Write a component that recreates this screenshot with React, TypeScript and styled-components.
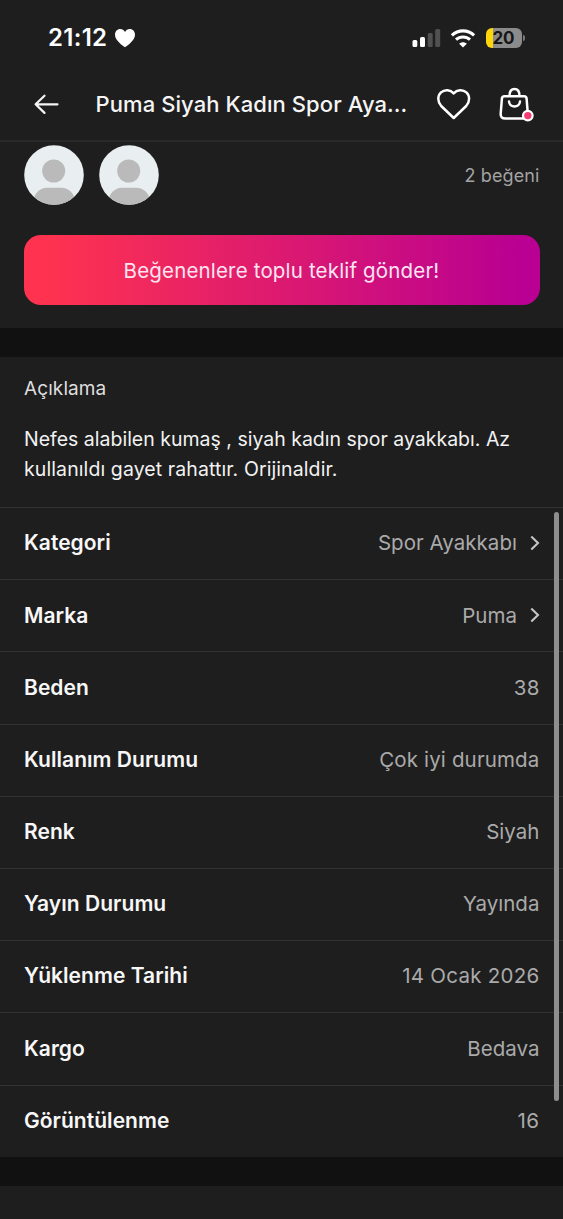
import React from "react";
import styled, { createGlobalStyle } from "styled-components";

const GlobalStyle = createGlobalStyle`
  * { box-sizing: border-box; }
  body {
    margin: 0;
    background: #1e1e1e;
    color: #f5f5f5;
    font-family: Inter, "Liberation Sans", sans-serif;
  }
`;

const Screen = styled.main`
  position: relative;
  display: flex;
  flex-direction: column;
  width: 563px;
  height: 1219px;
  overflow: hidden;
  background: #1e1e1e;
`;

const StatusBar = styled.div`
  display: flex;
  align-items: center;
  justify-content: space-between;
  height: 68px;
  padding: 8px 41.5px 0 48px;
`;

const Clock = styled.div`
  display: flex;
  align-items: center;
  gap: 6.5px;
  font-size: 24px;
  font-weight: 600;
  line-height: 28px;
  letter-spacing: 0.3px;
  color: #fff;
`;

const StatusIcons = styled.div`
  display: flex;
  align-items: center;
  gap: 9.5px;
`;

const Header = styled.header`
  display: flex;
  align-items: center;
  height: 74px;
  padding: 0 28px 0 33px;
  border-bottom: 2px solid #2a2a2a;
`;

const Title = styled.h1`
  flex: 1;
  margin: 0 0 0 35.5px;
  font-size: 22px;
  font-weight: 500;
  line-height: 30px;
  letter-spacing: 0.08px;
  white-space: nowrap;
  color: #f5f5f5;
`;

const HeaderActions = styled.div`
  display: flex;
  align-items: center;
  gap: 27px;
`;

const Likes = styled.section`
  display: flex;
  flex-direction: column;
  gap: 29.5px;
  height: 186px;
  padding: 3px 23.5px 0;
`;

const LikesRow = styled.div`
  display: flex;
  align-items: center;
  gap: 15px;
  height: 60.5px;
`;

const LikeCount = styled.span`
  margin-left: auto;
  font-size: 18px;
  letter-spacing: 0.1px;
  color: #a3a3a3;
`;

const OfferButton = styled.button`
  height: 70px;
  padding: 1px 0 0;
  border: 0;
  border-radius: 17px;
  background: linear-gradient(90deg, #ff334f 4%, #b90092 96%);
  color: #fde4f2;
  font-family: inherit;
  font-size: 20.5px;
  letter-spacing: 0.17px;
`;

const Band = styled.div`
  flex-shrink: 0;
  height: 29px;
  background: #111;
`;

const Description = styled.section`
  height: 151px;
  padding: 17px 24px 0;
  border-bottom: 1px solid #333;
`;

const SectionTitle = styled.h2`
  margin: 0 0 21px;
  font-size: 19px;
  font-weight: 400;
  line-height: 30px;
  letter-spacing: 0.1px;
  color: #dedede;
`;

const Line = styled.p<{ $track: number }>`
  margin: 0;
  font-size: 19.5px;
  line-height: 29.5px;
  letter-spacing: ${(p) => p.$track}px;
  white-space: nowrap;
  color: #f2f2f2;
`;

const Details = styled.dl`
  display: grid;
  grid-template-rows: repeat(8, 72.2px) 1fr;
  flex-shrink: 0;
  height: 648.5px;
  margin: 0;
`;

const DetailRow = styled.div`
  display: flex;
  align-items: center;
  justify-content: space-between;
  padding: 0 23.5px 1.5px 24px;
  &:not(:last-child) {
    border-bottom: 1px solid #333;
  }
`;

const Label = styled.dt`
  font-size: 21px;
  font-weight: 600;
  letter-spacing: 0.04px;
  color: #f7f7f7;
`;

const Value = styled.dd<{ $track: number }>`
  display: flex;
  align-items: center;
  gap: 12.5px;
  margin: 0;
  font-size: 20.5px;
  letter-spacing: ${(p) => p.$track}px;
  color: #aaa;
`;

const ScrollThumb = styled.div`
  position: absolute;
  top: 512px;
  right: 4px;
  width: 5px;
  height: 589px;
  border-radius: 3px;
  background: #8e8e8e;
`;

const SmallHeart = () => (
  <svg width="22" height="20" viewBox="0 0 22 20" fill="#fff">
    <path d="M11 19.2C8.800 17.600 1 12.600 1 6.700C1 3.400 3.300 1 6.200 1C8.300 1 10 2.100 11 3.900C12 2.100 13.700 1 15.800 1C18.700 1 21 3.400 21 6.700C21 12.600 13.200 17.600 11 19.200Z" />
  </svg>
);

const Signal = () => (
  <svg width="29" height="20" viewBox="0 0 29 20">
    <rect x="0.500" y="12" width="4.800" height="7" rx="1.500" fill="#fff" />
    <rect x="8" y="9" width="5" height="10" rx="1.500" fill="#fff" />
    <rect x="15.700" y="5" width="5" height="14" rx="1.500" fill="#505050" />
    <rect x="23.200" y="1" width="5" height="18" rx="1.500" fill="#505050" />
  </svg>
);

const Wifi = () => (
  <svg width="26" height="20" viewBox="0 0 26 20" fill="none" stroke="#fff" strokeWidth="3.100">
    <path d="M1.900 7.300C8.200 1.400 17.800 1.400 24.100 7.300" />
    <path d="M6 11.700C10 8 16 8 20 11.700" />
    <path d="M13 19.500L9.200 15.700C11.300 13.700 14.700 13.700 16.800 15.700Z" fill="#fff" stroke="none" />
  </svg>
);

const BatteryShell = styled.div`
  position: relative;
  display: flex;
  align-items: center;
  justify-content: center;
  width: 36px;
  height: 20px;
  border-radius: 6px;
  background: linear-gradient(90deg, #ffd60a 20%, #8b8b8b 20%);
  color: #161616;
  font-size: 17px;
  font-weight: 700;
  letter-spacing: -0.2px;
  &::after {
    content: "";
    position: absolute;
    top: 7px;
    right: -3px;
    width: 2px;
    height: 6px;
    border-radius: 0 2px 2px 0;
    background: #7a7a7a;
  }
`;

const BackArrow = () => (
  <svg width="27" height="22" viewBox="0 0 27 22" fill="none" stroke="#f5f5f5" strokeWidth="2.200" strokeLinecap="round" strokeLinejoin="round">
    <path d="M24.500 11.300H2.800M11.500 2.700L2.600 11.300L11.500 19.900" />
  </svg>
);

const HeartOutline = () => (
  <svg width="34" height="34" viewBox="0 0 34 34" fill="none" stroke="#fff" strokeWidth="2.500" strokeLinejoin="round">
    <path d="M16.700 31L4.200 19C0.500 15 0.300 8.800 4 5.400C7.700 2.100 13.300 2.500 16.700 6.400C20.100 2.500 25.700 2.100 29.400 5.400C33.100 8.800 32.900 15 29.200 19Z" />
  </svg>
);

const Bag = () => (
  <svg width="37" height="36" viewBox="0 0 37 36" fill="none" stroke="#fff" strokeWidth="2.500" strokeLinecap="round">
    <path d="M6.500 10.200H26C27.600 10.200 28.500 11 28.600 12.600L29.800 27.500C30.100 31 28.500 32.500 25.500 32.500H7.500C4 32.500 2.400 31 2.700 27.500L3.900 12.600C4 11 4.900 10.200 6.500 10.200Z" />
    <path d="M11.500 9.700C11.500 5.500 13.300 2.900 16.500 2.900C19.700 2.900 21.500 5.500 21.500 9.700" />
    <path d="M11 15.500C11.500 22 21.500 22 22 15.500" />
    <circle cx="29.800" cy="29.600" r="4.800" fill="#f23d74" stroke="#fff" strokeWidth="2.200" />
  </svg>
);

const Avatar = () => (
  <svg width="60" height="60" viewBox="0 0 60 60">
    <clipPath id="avatar-disc"><circle cx="30" cy="30" r="29.800" /></clipPath>
    <g clipPath="url(#avatar-disc)">
      <rect width="60" height="60" fill="#e9eef0" />
      <circle cx="29.700" cy="26" r="11.500" fill="#bababa" />
      <rect x="10" y="42.700" width="40.500" height="30" rx="13" fill="#bababa" />
    </g>
  </svg>
);

const Chevron = () => (
  <svg width="10" height="16" viewBox="0 0 10 16" fill="none" stroke="#c4c4c4" strokeWidth="2.100">
    <path d="M1.300 1.500L8 8L1.300 14.500" />
  </svg>
);

type Detail = { label: string; value: string; link?: boolean; track?: number };

const details: Detail[] = [
  { label: "Kategori", value: "Spor Ayakkabı", link: true },
  { label: "Marka", value: "Puma", link: true },
  { label: "Beden", value: "38", track: 0.15 },
  { label: "Kullanım Durumu", value: "Çok iyi durumda", track: 0.15 },
  { label: "Renk", value: "Siyah" },
  { label: "Yayın Durumu", value: "Yayında" },
  { label: "Yüklenme Tarihi", value: "14 Ocak 2026", track: 0.27 },
  { label: "Kargo", value: "Bedava" },
  { label: "Görüntülenme", value: "16", track: 0.5 },
];

export default function App() {
  return (
    <Screen>
      <GlobalStyle />
      <StatusBar>
        <Clock>21:12<SmallHeart /></Clock>
        <StatusIcons>
          <Signal />
          <Wifi />
          <BatteryShell>20</BatteryShell>
        </StatusIcons>
      </StatusBar>
      <Header>
        <BackArrow />
        <Title>Puma Siyah Kadın Spor Aya...</Title>
        <HeaderActions>
          <HeartOutline />
          <Bag />
        </HeaderActions>
      </Header>
      <Likes>
        <LikesRow>
          <Avatar />
          <Avatar />
          <LikeCount>2 beğeni</LikeCount>
        </LikesRow>
        <OfferButton>Beğenenlere toplu teklif gönder!</OfferButton>
      </Likes>
      <Band />
      <Description>
        <SectionTitle>Açıklama</SectionTitle>
        <Line $track={0}>Nefes alabilen kumaş , siyah kadın spor ayakkabı. Az</Line>
        <Line $track={0.1}>kullanıldı gayet rahattır. Orijinaldir.</Line>
      </Description>
      <Details>
        {details.map((d) => (
          <DetailRow key={d.label}>
            <Label>{d.label}</Label>
            <Value $track={d.track ?? 0.03}>
              {d.value}
              {d.link && <Chevron />}
            </Value>
          </DetailRow>
        ))}
      </Details>
      <Band />
      <ScrollThumb />
    </Screen>
  );
}
